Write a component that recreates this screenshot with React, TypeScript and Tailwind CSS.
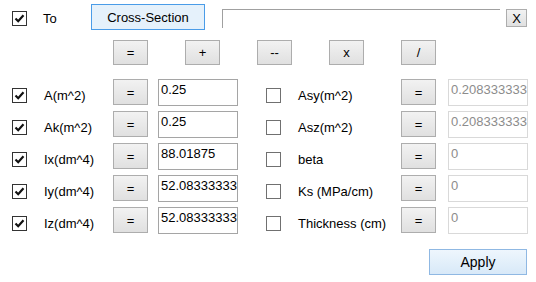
type RowProps = {
  checked: boolean;
  label: string;
  value: string;
  disabled?: boolean;
};

const font = { fontFamily: '"Liberation Sans", Arial, sans-serif' };

const Check = ({ checked }: { checked: boolean }) => (
  <div
    className={`w-[15px] h-[15px] shrink-0 bg-white border flex items-center justify-center ${
      checked ? "border-[#333333]" : "border-[#707070]"
    }`}
  >
    {checked && (
      <svg width="11" height="11" viewBox="0 0 11 11">
        <path d="M1.5 5.5 L4.2 8.2 L9.5 2.2" fill="none" stroke="#111" strokeWidth="2.2" />
      </svg>
    )}
  </div>
);

const GrayButton = ({ children, className = "" }: { children: string; className?: string }) => (
  <button
    className={`shrink-0 border border-[#adadad] bg-gradient-to-b from-[#f2f2f2] to-[#e0e0e0] text-[13px] leading-none text-black flex items-center justify-center ${className}`}
  >
    {children}
  </button>
);

const Field = ({ value, disabled }: { value: string; disabled?: boolean }) => (
  <div
    className={`h-[27px] shrink-0 bg-white border overflow-hidden whitespace-nowrap pl-[2px] pt-[2px] text-[13px] leading-[15px] ${
      disabled ? "border-[#d9d9d9] text-[#8c8c8c]" : "border-[#a5a5a5] text-black"
    }`}
  >
    {value}
  </div>
);

const Cell = ({ checked, label, value, disabled, labelW, inputW, gapIn }: RowProps & { labelW: string; inputW: string; gapIn: string }) => (
  <div className="flex items-start">
    <div className="mt-[9px]">
      <Check checked={checked} />
    </div>
    <div className={`${labelW} pl-[17px] mt-[9px] text-[13px] leading-[15px] text-black whitespace-nowrap`}>{label}</div>
    <GrayButton className="w-[35px] h-[26px]">=</GrayButton>
    <div className={`${gapIn} ${inputW}`}>
      <Field value={value} disabled={disabled} />
    </div>
  </div>
);

const left: RowProps[] = [
  { checked: true, label: "A(m^2)", value: "0.25" },
  { checked: true, label: "Ak(m^2)", value: "0.25" },
  { checked: true, label: "Ix(dm^4)", value: "88.01875" },
  { checked: true, label: "Iy(dm^4)", value: "52.08333333" },
  { checked: true, label: "Iz(dm^4)", value: "52.08333333" },
];

const right: RowProps[] = [
  { checked: false, label: "Asy(m^2)", value: "0.208333333", disabled: true },
  { checked: false, label: "Asz(m^2)", value: "0.208333333", disabled: true },
  { checked: false, label: "beta", value: "0", disabled: true },
  { checked: false, label: "Ks (MPa/cm)", value: "0", disabled: true },
  { checked: false, label: "Thickness (cm)", value: "0", disabled: true },
];

export default function App() {
  return (
    <div className="w-[536px] h-[282px] bg-white pt-[4px] overflow-hidden" style={font}>
      {/* top row */}
      <div className="flex items-start pl-[12px] h-[26px]">
        <div className="mt-[7px]">
          <Check checked />
        </div>
        <div className="w-[64px] pl-[16px] mt-[7px] text-[13px] leading-[15px]">To</div>
        <button className="w-[114px] h-[26px] border border-[#4a9ce8] bg-[#e5f1fb] text-[13px] leading-none text-black">
          Cross-Section
        </button>
        <div className="ml-[17px] mt-[5px] w-[278px] h-[19px] border-t border-l border-[#a0a0a0]" />
        <GrayButton className="ml-[6px] mt-[5px] w-[21px] h-[18px]">X</GrayButton>
      </div>

      {/* operators */}
      <div className="flex pl-[113px] gap-[37px] mt-[10px]">
        {["=", "+", "--", "x", "/"].map((op) => (
          <GrayButton key={op} className="w-[35px] h-[25px]">
            {op}
          </GrayButton>
        ))}
      </div>

      <div className="mt-[14px] flex flex-col gap-[5px] pl-[12px]">
        {left.map((l, i) => (
          <div key={l.label} className="flex h-[27px]">
            <Cell {...l} labelW="w-[86px]" inputW="w-[80px]" gapIn="ml-[10px]" />
            <div className="ml-[28px]">
              <Cell {...right[i]} labelW="w-[120px]" inputW="w-[80px]" gapIn="ml-[12px]" />
            </div>
          </div>
        ))}
      </div>

      <div className="flex justify-end pr-[9px] mt-[15px]">
        <button className="w-[98px] h-[26px] border border-[#8fb8e3] bg-gradient-to-b from-[#eef6fd] to-[#d8e9f8] text-[14px] leading-none text-black">
          Apply
        </button>
      </div>
    </div>
  );
}
